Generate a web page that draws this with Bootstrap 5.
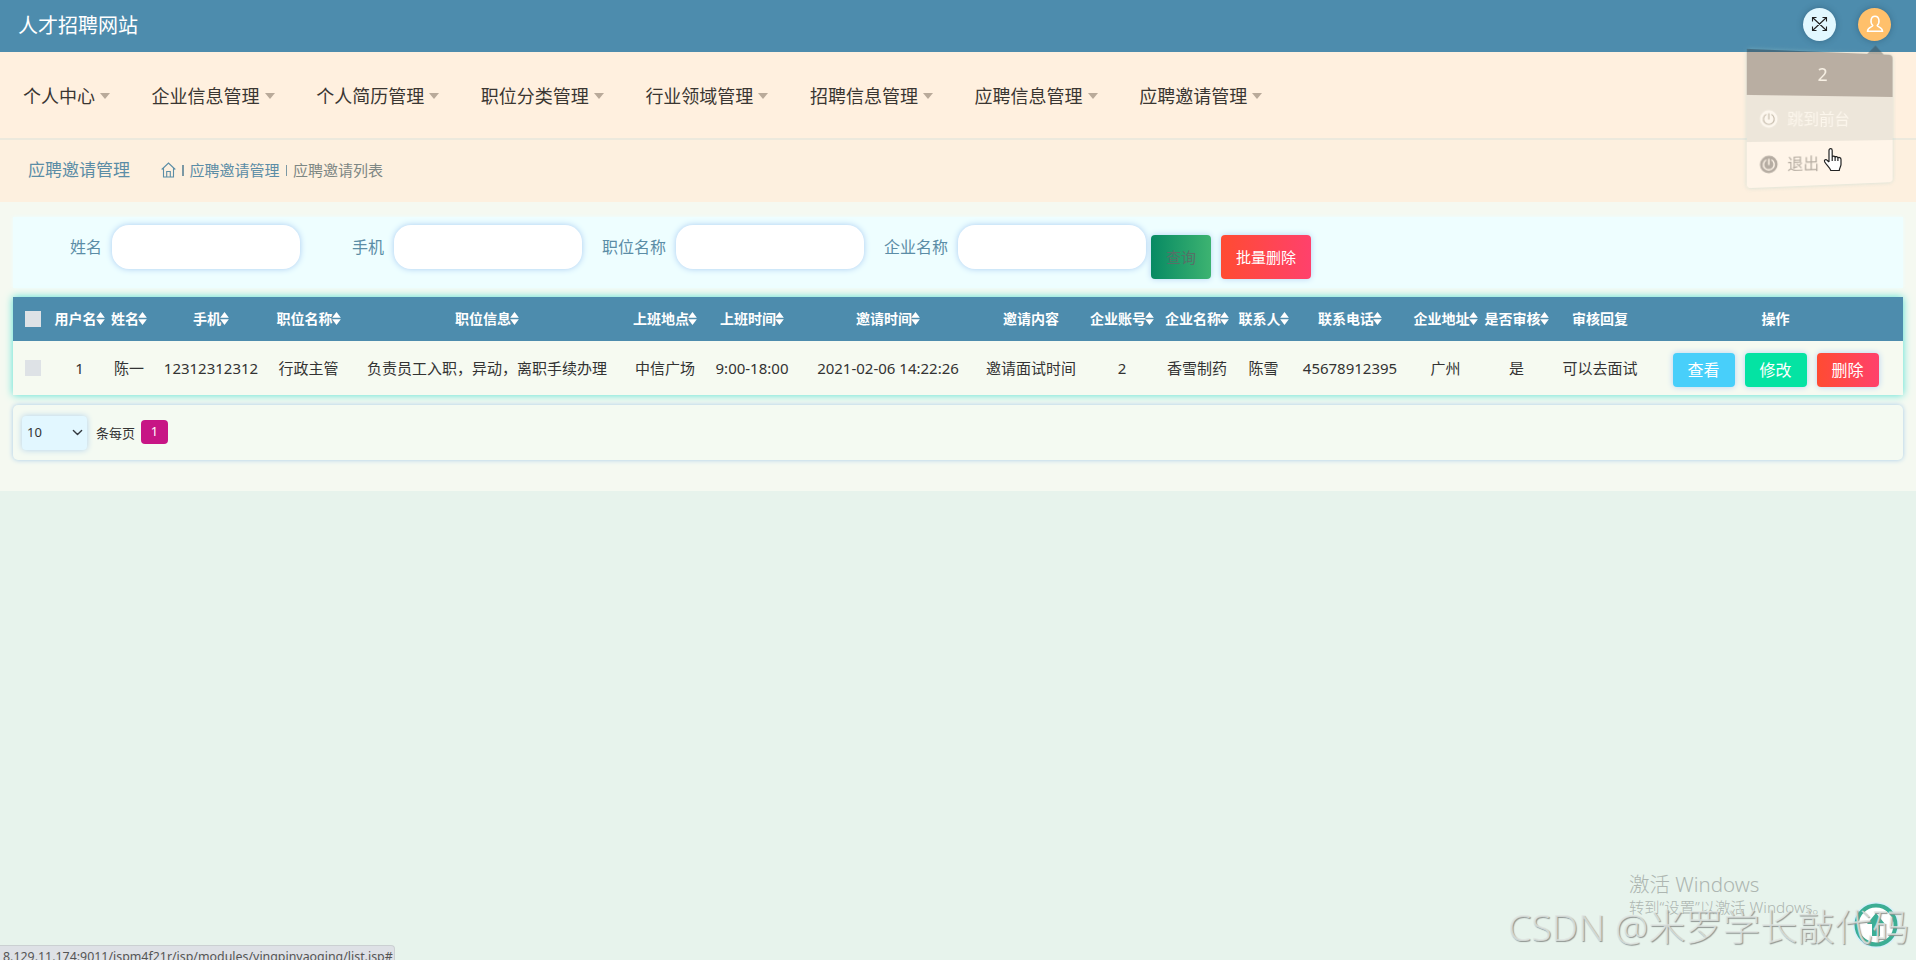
<!DOCTYPE html>
<html lang="zh-CN">
<head>
<meta charset="utf-8">
<meta name="viewport" content="width=device-width, initial-scale=1">
<title>人才招聘网站</title>
<link rel="stylesheet" href="https://cdn.jsdelivr.net/npm/bootstrap@5.3.0/dist/css/bootstrap.min.css">
<style>
body{font-family:"Noto Sans","Noto Sans CJK SC",sans-serif;font-weight:400;background:#e7f3ec;color:#333;height:960px;overflow:hidden;position:relative;line-height:1.5}
.topbar{background:#4d8cad;height:52px;padding:0 25px 4px 18px}
.site-name{font-size:20px;color:#fff;line-height:44px;padding-top:4px}
.round-btn{width:33px;height:33px;border-radius:50%;box-shadow:0 0 6px rgba(20,50,70,.35)}
.round-full{background:#e2f8ff}
.round-user{background:#ffc06b}
.mainnav{background:#fff0df;height:86px;padding:2px 23px 0;gap:41.600px;font-size:18px;color:#333}
.mainnav .nav-link{color:#3a3632;padding:0;gap:5px;height:24px}
.tri{width:0;height:0;border:5.5px solid transparent;border-top:6px solid #b9aa9a;border-bottom:0}
.crumbs{background:#fdf0df;height:64px;border-top:2px solid #ece9dd;padding:0 28px 2px;color:#5b8da6}
.crumb-title{font-size:17px;width:133px}
.crumb-list{font-size:15px;gap:6px}
.crumb-list .bar{width:1.500px;height:11px;background:#7b98a4}
.crumb-list .here{color:#7d8784}
.content-area{background:#f5f9f1;height:289px;padding:15px 13px 0}
.searchbar{background:#eefeff;height:71px;box-shadow:0 0 4px #eefeff;padding-top:8px}
.field{width:282px;gap:10px;height:44px;color:#5b8da6;font-size:16px}
.field-first{width:287px}
.field .form-control{width:188px;height:44px;border:0;border-radius:17px;background:#fff;box-shadow:0 0 6px #a9ccf2}
.act{border:0;border-radius:4px;color:#fff;font-weight:400;padding:0;box-shadow:0 0 6px #b4d3f3}
.act-lg{height:44px;font-size:15px;margin-top:10px}
.act-find{width:60px;margin-left:5px}
.act-bulk{width:90px;margin-left:10px}
.act-sm{width:62px;height:34px;font-size:16px;line-height:34px}
.g-view{background:#48cffa}
.g-edit{background:#04e3a3}
.g-green{background:linear-gradient(90deg,#078a63,#3db371);color:#567067}
.g-red{background:linear-gradient(90deg,#ff4b32,#ff416c)}
.grid-table{table-layout:fixed;width:1890px;margin:9px 0 0;text-align:center;white-space:nowrap;box-shadow:0 0 8px #4fe0d4}
.grid-table th,.grid-table td{padding:0;vertical-align:middle}
.grid-table th{background:#4d8cad;color:#fff;font-size:14px;font-weight:700;height:44px;padding-bottom:2px}
.grid-table td{background:#f6faf1;color:#333;font-size:15px;height:54px}
.sort{width:9px;height:13px;margin:-2px 0 0 -1px}
.tick{display:block;width:16px;height:16px;background:#dee2e6;margin:1px 0 0 12px}
td .tick{margin-top:-1px}
.row-acts{gap:10px;padding-top:4px}
.pager{height:55px;margin-top:10px;border-radius:5px;box-shadow:0 0 5px #a6cbe8;background:#f4faf2;padding-left:9px;font-size:13px}
.pager .form-select{width:65px;height:34px;border:0;border-radius:4px;background-color:#e2f7ff;font-size:13px;font-weight:400;padding:1px 0 0 5px;color:#333;box-shadow:0 0 6px #b0d0ea;background-position:right 4px center;background-size:11px 11px}
.per-page{margin:2px 0 0 9px}
.page-no{width:27px;height:24px;border-radius:4px;background:#c71585;color:#fff;margin-left:6px;margin-top:-2px}
/* account menu, turned slightly around its vertical axis while it opens */
.usermenu{position:absolute;left:1747.5px;top:52px;width:149.5px;height:133px;transform:perspective(400px) rotateY(14deg);border-radius:4px;box-shadow:0 0 4px rgba(150,200,200,.45);font-size:16px}
.usermenu .arrow-up{position:absolute;right:10px;top:-9px;border:9px solid transparent;border-bottom-color:rgba(51,46,44,.34);border-top:0}
.um-head{height:44px;background:rgba(51,46,44,.34);color:#faf2e6;font-size:18px;border-radius:0 4px 0 0}
.um-item{height:45px;padding-left:12px;gap:9px}
.um-a{background:#ede6da;color:#fcf6ec}
.um-b{background:#fff5e9;color:#b7aea3;height:44px;border-radius:0 0 4px 4px}
.pointer{position:absolute;left:1823px;top:147px}
.activate{position:absolute;left:1629px;top:870px;color:#adb6b1;line-height:28px;font-weight:300}
.activate .l1{font-size:20.500px}
.activate .l2{font-size:15.300px;line-height:18px}
.totop{position:absolute;left:1852px;top:901px}
.stamp{position:absolute;left:1508px;top:899px;font-size:37.300px;font-weight:300;line-height:56px;white-space:nowrap;color:rgba(225,230,227,.8);text-shadow:1px 1px 1px #8f9592}
.statusbar{position:absolute;left:0;bottom:0;height:15px;width:395px;background:#dee1e6;border:1px solid #cbd0d2;border-width:1px 1px 0 0;border-radius:0 4px 0 0;overflow:hidden;font-size:12.400px;line-height:22px;padding-left:3px;color:#555;white-space:nowrap}
</style>
</head>
<body>
<header class="topbar d-flex align-items-center justify-content-between">
  <span class="site-name">人才招聘网站</span>
  <div class="d-flex" style="gap:22px">
    <span class="round-btn round-full d-flex align-items-center justify-content-center">
      <svg width="17" height="16" viewBox="0 0 17 16" fill="none" stroke="#222" stroke-width="1.1"><path d="M1.500 1.500l14 13M15.500 1.500l-14 13M1.500 5.500v-4h4M11.500 1.500h4v4M15.500 10.500v4h-4M5.500 14.500h-4v-4"/></svg>
    </span>
    <span class="round-btn round-user d-flex align-items-center justify-content-center">
      <svg width="18" height="18" viewBox="0 0 18 18" fill="none" stroke="#fff" stroke-width="1.5"><path d="M6.800 10.500C4 8 4.300 1.200 9 1.200s5 6.800 2.200 9.300c0 1.500 5.300 1.500 5.300 5.700h-15c0-4.200 5.300-4.200 5.300-5.700z"/></svg>
    </span>
  </div>
</header>
<nav class="mainnav nav flex-nowrap align-items-center">
  <a class="nav-link d-flex align-items-center">个人中心<i class="tri"></i></a>
  <a class="nav-link d-flex align-items-center">企业信息管理<i class="tri"></i></a>
  <a class="nav-link d-flex align-items-center">个人简历管理<i class="tri"></i></a>
  <a class="nav-link d-flex align-items-center">职位分类管理<i class="tri"></i></a>
  <a class="nav-link d-flex align-items-center">行业领域管理<i class="tri"></i></a>
  <a class="nav-link d-flex align-items-center">招聘信息管理<i class="tri"></i></a>
  <a class="nav-link d-flex align-items-center">应聘信息管理<i class="tri"></i></a>
  <a class="nav-link d-flex align-items-center">应聘邀请管理<i class="tri"></i></a>
</nav>
<div class="crumbs d-flex align-items-center">
  <span class="crumb-title">应聘邀请管理</span>
  <div class="crumb-list d-flex align-items-center">
    <svg width="15" height="16" viewBox="0 0 15 16" fill="none" stroke="#5b8da6" stroke-width="1.1"><path d="M.700 7.500L7.500 1l6.800 6.500M2.500 6v9h10V6M5.700 15V9.500h3.600V15"/></svg>
    <i class="bar"></i><span>应聘邀请管理</span><i class="bar"></i><span class="here">应聘邀请列表</span>
  </div>
</div>
<main class="content-area">
  <form class="searchbar d-flex align-items-start">
    <div class="field field-first d-flex align-items-center justify-content-end"><label>姓名</label><input class="form-control"></div>
    <div class="field d-flex align-items-center justify-content-end"><label>手机</label><input class="form-control"></div>
    <div class="field d-flex align-items-center justify-content-end"><label>职位名称</label><input class="form-control"></div>
    <div class="field d-flex align-items-center justify-content-end"><label>企业名称</label><input class="form-control"></div>
    <button type="button" class="btn act act-lg act-find g-green">查询</button>
    <button type="button" class="btn act act-lg act-bulk g-red">批量删除</button>
  </form>
  <table class="grid-table">
    <colgroup id="cols"></colgroup>
    <thead><tr id="heads"></tr></thead>
    <tbody><tr id="cells"></tr></tbody>
  </table>
  <div class="pager d-flex align-items-center">
    <select class="form-select"><option>10</option></select>
    <span class="per-page">条每页</span>
    <span class="page-no d-flex align-items-center justify-content-center">1</span>
  </div>
</main>

<div class="usermenu">
  <i class="arrow-up"></i>
  <div class="um-head d-flex align-items-center justify-content-center">2</div>
  <div class="um-item um-a d-flex align-items-center"><svg width="18" height="18" viewBox="0 0 18 18"><circle cx="9" cy="9" r="8.500" fill="#fdf7ee"/><path d="M6.500 4.500a5.200 5.200 0 1 0 5 0M9 3.500v6" fill="none" stroke="#c9bfb0" stroke-width="1.200"/></svg><span>跳到前台</span></div>
  <div class="um-item um-b d-flex align-items-center"><svg width="18" height="18" viewBox="0 0 18 18"><circle cx="9" cy="9" r="8.500" fill="#b5aca2"/><path d="M6.500 4.500a5.200 5.200 0 1 0 5 0M9 3.500v6" fill="none" stroke="#fff5e9" stroke-width="1.400"/></svg><span>退出</span></div>
</div>
<svg class="pointer" width="20" height="26" viewBox="0 0 20 26"><path d="M6 15V3.500c0-2.500 3.200-2.500 3.200 0V10c.5-1.400 2.700-1.200 2.900.4.600-1.200 2.600-.9 2.800.7.700-1.100 3.100-.7 3.100 1.300v5.100c0 2.200-1.700 3.500-1.700 6H7.800c-.8-2.800-4.500-5.500-6.200-8.800-.7-1.600 1.200-2.800 2.500-1.500L6 15M9.200 10v4M12.100 10.500V14M14.900 11.500V14" fill="#fff" stroke="#222" stroke-width="1.200" stroke-linejoin="round"/></svg>

<div class="activate"><div class="l1">激活 Windows</div><div class="l2">转到“设置”以激活 Windows。</div></div>
<svg class="totop" width="48" height="48" viewBox="0 0 48 48"><circle cx="24" cy="24" r="23" fill="#d5effa"/><circle cx="24" cy="24" r="19.500" fill="#fff" stroke="#3cae94" stroke-width="4"/><path d="M24 12l9 11h-5v12h-8V23h-5z" fill="#3cae94"/></svg>
<div class="stamp">CSDN @米罗学长敲代码</div>
<div class="statusbar">8.129.11.174:9011/jspm4f21r/jsp/modules/yingpinyaoqing/list.jsp#</div>

<script src="https://cdn.jsdelivr.net/npm/bootstrap@5.3.0/dist/js/bootstrap.bundle.min.js"></script>
<script>
const columns = [
  [53,'用户名',1,'1'],[46,'姓名',1,'陈一'],[118,'手机',1,'12312312312'],[77,'职位名称',1,'行政主管'],
  [280,'职位信息',1,'负责员工入职，异动，离职手续办理'],[76,'上班地点',1,'中信广场'],[98,'上班时间',1,'9:00-18:00'],
  [174,'邀请时间',1,'2021-02-06 14:22:26'],[112,'邀请内容',0,'邀请面试时间'],[70,'企业账号',1,'2'],
  [80,'企业名称',1,'香雪制药'],[53,'联系人',1,'陈雪'],[120,'联系电话',1,'45678912395'],[71,'企业地址',1,'广州'],
  [71,'是否审核',1,'是'],[96,'审核回复',0,'可以去面试']
];
const sort = '<svg class="sort" viewBox="0 0 8 12" fill="#fff"><path d="M4 0l4 5.400H0zM4 12l4-5.400H0z"/></svg>';
document.getElementById('cols').innerHTML = '<col style="width:40px">' + columns.map(c => `<col style="width:${c[0]}px">`).join('') + '<col style="width:255px">';
document.getElementById('heads').innerHTML = '<th><i class="tick"></i></th>' + columns.map(c => `<th>${c[1]}${c[2] ? sort : ''}</th>`).join('') + '<th>操作</th>';
document.getElementById('cells').innerHTML = '<td><i class="tick"></i></td>' + columns.map(c => `<td>${c[3]}</td>`).join('') +
  '<td><div class="row-acts d-flex justify-content-center"><button class="btn act act-sm g-view">查看</button><button class="btn act act-sm g-edit">修改</button><button class="btn act act-sm g-red">删除</button></div></td>';
</script>
</body>
</html>
